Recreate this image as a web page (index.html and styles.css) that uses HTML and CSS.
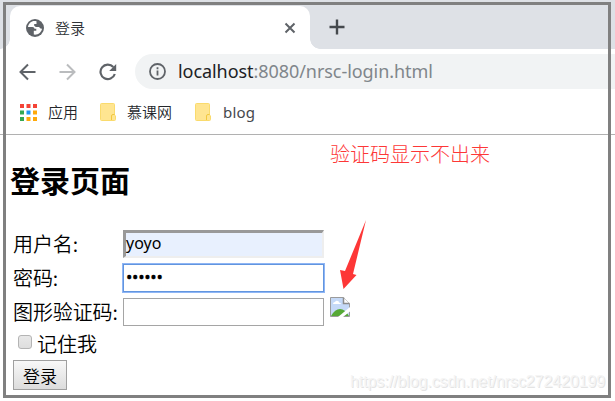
FILE: index.html
```html
<!DOCTYPE html>
<html lang="zh-CN">
<head>
<meta charset="utf-8">
<title>登录</title>
<link rel="stylesheet" href="styles.css">
</head>
<body>
<div class="window">
  <header class="tabstrip">
    <div class="tab-foot left-foot"></div>
    <div class="tab">
      <svg class="globe" width="18" height="18" viewBox="0 0 18 18"><circle cx="9" cy="9" r="9" fill="#5f6368"/><path d="M10.500 2.200C6 1 2.500 4 2 8h4.500q2 0 2 1.800h1.800v2H7.800v3.800c4.200.6 7.600-2.200 8.200-5.800l-1.500-.3-1.500-1.500H9.800L8.200 6.700V5h2.300z" fill="#fff"/><path d="M2 8q0 5.500 4.500 7.400V13L3.500 10z" fill="#5f6368"/></svg>
      <span class="tab-title">登录</span>
      <svg class="close" width="12" height="12" viewBox="0 0 12 12"><path d="M1.500 1.500l9 9M10.500 1.500l-9 9" stroke="#5f6368" stroke-width="2"/></svg>
    </div>
    <div class="tab-foot right-foot"></div>
    <svg class="plus" width="16" height="16" viewBox="0 0 16 16"><path d="M8 .5v15M.5 8h15" stroke="#45494d" stroke-width="2.400"/></svg>
  </header>
  <nav class="toolbar">
    <svg width="18" height="18" viewBox="0 0 18 18" fill="none" stroke="#5f6368" stroke-width="2"><path d="M16.500 9H2M9 1.500L1.500 9 9 16.500"/></svg>
    <svg width="18" height="18" viewBox="0 0 18 18" fill="none" stroke="#babcbe" stroke-width="2"><path d="M.5 9H15M8 1.500L15.500 9 8 16.500"/></svg>
    <svg class="reload" width="18" height="18" viewBox="0 0 18 18"><path d="M14.300 4A7.300 7.300 0 1 0 15.800 11" fill="none" stroke="#5f6368" stroke-width="2.200"/><path d="M17.200 1v7h-7z" fill="#5f6368"/></svg>
    <div class="address">
      <svg width="17" height="17" viewBox="0 0 17 17"><circle cx="8.500" cy="8.500" r="7.500" fill="none" stroke="#5f6368" stroke-width="1.800"/><path d="M8.500 7.500v5M8.500 4.300v1.900" stroke="#5f6368" stroke-width="1.800"/></svg>
      <span class="url"><span class="host">localhost</span>:8080/nrsc-login.html</span>
    </div>
  </nav>
  <nav class="bookmarks">
    <svg width="17" height="17" viewBox="0 0 17 17"><path d="M0 0h4v4H0zM6.500 0h4v4h-4zM13 0h4v4h-4z" fill="#f44336"/><path d="M0 6.500h4v4H0zM0 13h4v4H0z" fill="#34a853"/><path d="M6.500 6.500h4v4h-4z" fill="#2196f3"/><path d="M13 6.500h4v4h-4zM6.500 13h4v4h-4zM13 13h4v4h-4z" fill="#ffa90a"/></svg>
    <span class="bm-apps">应用</span>
    <svg class="folder" width="16" height="18" viewBox="0 0 16 18"><path d="M1.500.5h12q1 0 1 1v10.500l1 1v3.500q0 1-1 1h-13q-1 0-1-1v-15q0-1 1-1z" fill="#ffe591" stroke="#fadb6d"/><path d="M11.500 17v-4q0-1.500 1.500-1.500h1.500" fill="none" stroke="#f2c83e"/></svg>
    <span class="bm-mooc">慕课网</span>
    <svg class="folder" width="16" height="18" viewBox="0 0 16 18"><path d="M1.500.5h12q1 0 1 1v10.500l1 1v3.500q0 1-1 1h-13q-1 0-1-1v-15q0-1 1-1z" fill="#ffe591" stroke="#fadb6d"/><path d="M11.500 17v-4q0-1.500 1.500-1.500h1.500" fill="none" stroke="#f2c83e"/></svg>
    <span class="bm-blog">blog</span>
  </nav>
  <main class="page">
    <h1>登录页面</h1>
    <div class="form">
      <span class="label">用户名:</span><div class="field user">yoyo</div>
      <span class="label">密码:</span><div class="field pass">••••••</div>
      <span class="label">图形验证码:</span><div class="field"></div>
      <svg class="broken" width="20" height="20" viewBox="0 0 20 20"><path d="M.5.500h13l6 6v13H.5z" fill="#c5d9f7" stroke="#9b9b9b"/><path d="M3 7q0-2 2-2 1-2 3-1 1 0 1 1.500 2 0 2 1.500z" fill="#fff"/><path d="M1 19q4-7 9-7 5 0 9 7z" fill="#56a936"/><path d="M13.500.5v6h6" fill="#fff" stroke="#8d8d8d" stroke-width="1.500"/><path d="M8 20L20 10v4.500L13 20z" fill="#fff"/></svg>
    </div>
    <div class="remember"><span class="check"></span><span>记住我</span></div>
    <div class="submit">登录</div>
  </main>
</div>
<div class="frame"></div>
<div class="note">验证码显示不出来</div>
<svg class="arrow" width="28" height="70" viewBox="0 0 28 70"><path d="M26 0L13 54l3.500 1L3.500 69 0 50l5 1z" fill="#fd3737"/></svg>
<div class="watermark">https://blog.csdn.net/nrsc272420199</div>
</body>
</html>
```
FILE: styles.css
```css
* { box-sizing: border-box; }
body { margin: 0; width: 615px; height: 401px; overflow: hidden; background: #fff; color: #000; font-family: "Noto Sans", "Noto Sans CJK SC", sans-serif; }
svg { display: block; flex: none; }
.tabstrip { display: flex; height: 49px; padding-top: 6px; background: #dee1e6; }
.tab { display: flex; align-items: center; width: 300px; height: 43px; padding: 0 14px 0 16px; background: #fff; border-radius: 10px 10px 0 0; }
.tab-title { margin-left: 11px; flex: 1; font: 350 15px/20px "Noto Sans CJK SC", sans-serif; color: #303438; }
.tab-foot { width: 10px; height: 10px; align-self: flex-end; }
.left-foot { background: radial-gradient(circle at 0 0, transparent 9.5px, #fff 10px); }
.right-foot { background: radial-gradient(circle at 100% 0, transparent 9.5px, #fff 10px); }
.plus { margin: 13px 0 0 9px; }
.toolbar { display: flex; align-items: center; height: 45px; padding-left: 19px; gap: 22px; }
.address { display: flex; align-items: center; flex: 1; height: 35px; margin-left: -4px; padding-left: 14px; border-radius: 18px 0 0 18px; background: #f1f3f4; }
.url { margin-left: 12px; margin-top: -1px; font: 18px/24px "Noto Sans", sans-serif; letter-spacing: -.06px; color: #80868b; white-space: nowrap; }
.host { color: #202124; }
.bookmarks { display: flex; align-items: center; height: 41px; padding: 0 0 4px 20px; border-bottom: 1px solid #b1b1b1; font: 350 15px/20px "Noto Sans CJK SC", sans-serif; color: #24272b; }
.bm-apps { width: 52px; margin-left: 11px; }
.bm-mooc { width: 68px; margin-left: 11px; }
.bm-blog { margin-left: 12px; font-family: "Noto Sans", sans-serif; font-weight: 400; color: #45484c; letter-spacing: .2px; }
.page { padding: 22px 0 0 10px; }
h1 { margin: 0; height: 44px; font: 700 30px/44px "Noto Sans CJK SC", sans-serif; }
.form { display: grid; grid-template-columns: 110px 201px 20px; grid-auto-rows: 28px; row-gap: 6px; margin: 29px 0 0 3px; }
.label, .remember { font: 350 20px/28px "Noto Sans CJK SC", sans-serif; white-space: nowrap; }
.field { grid-column: 2; height: 28px; border: 1px solid #a5a5a5; font: 16px/24px "Noto Sans", sans-serif; }
.label { grid-column: 1; letter-spacing: -.1px; }
.field.user { padding-left: 0; line-height: 20px; border-style: solid; border-width: 3px 2px 2px 3px; border-color: #999 #eee #eee #999; background: #e8f0fe; }
.field.pass { padding-left: 2px; border-color: #6295df; box-shadow: 0 0 0 1px #8fb6f5; font-size: 17px; line-height: 23px; -webkit-text-stroke: .3px #000; letter-spacing: -.3px; }
.broken { grid-column: 3; grid-row: 3; margin: -1px 0 0 6px; }
.remember { display: flex; align-items: center; gap: 5px; height: 28px; margin: 4px 0 0 8px; }
.check { width: 14px; height: 14px; margin-top: -4px; border: 1px solid #b4b4b4; border-radius: 3px; background: linear-gradient(#e8e8e8, #dedede); }
.submit { width: 54px; height: 30px; margin: 2px 0 0 3px; border: 1px solid #a0a0a0; background: linear-gradient(#f8f8f8, #dcdcdc); font: 350 17px/29px "Noto Sans CJK SC", sans-serif; text-align: center; }
.frame { position: absolute; left: 3px; top: 2px; width: 608px; height: 396px; border: 3px solid #808080; }
.note { position: absolute; left: 330px; top: 139px; font: 300 20px/30px "Noto Sans CJK SC", sans-serif; color: #fd3737; }
.arrow { position: absolute; left: 340px; top: 220px; }
.watermark { position: absolute; left: 350px; top: 372px; font: 16px/20px "Liberation Sans", sans-serif; letter-spacing: -.08px; color: #f5f5f5; text-shadow: 1px 1px 0 #e4e4e4; white-space: nowrap; }
```
